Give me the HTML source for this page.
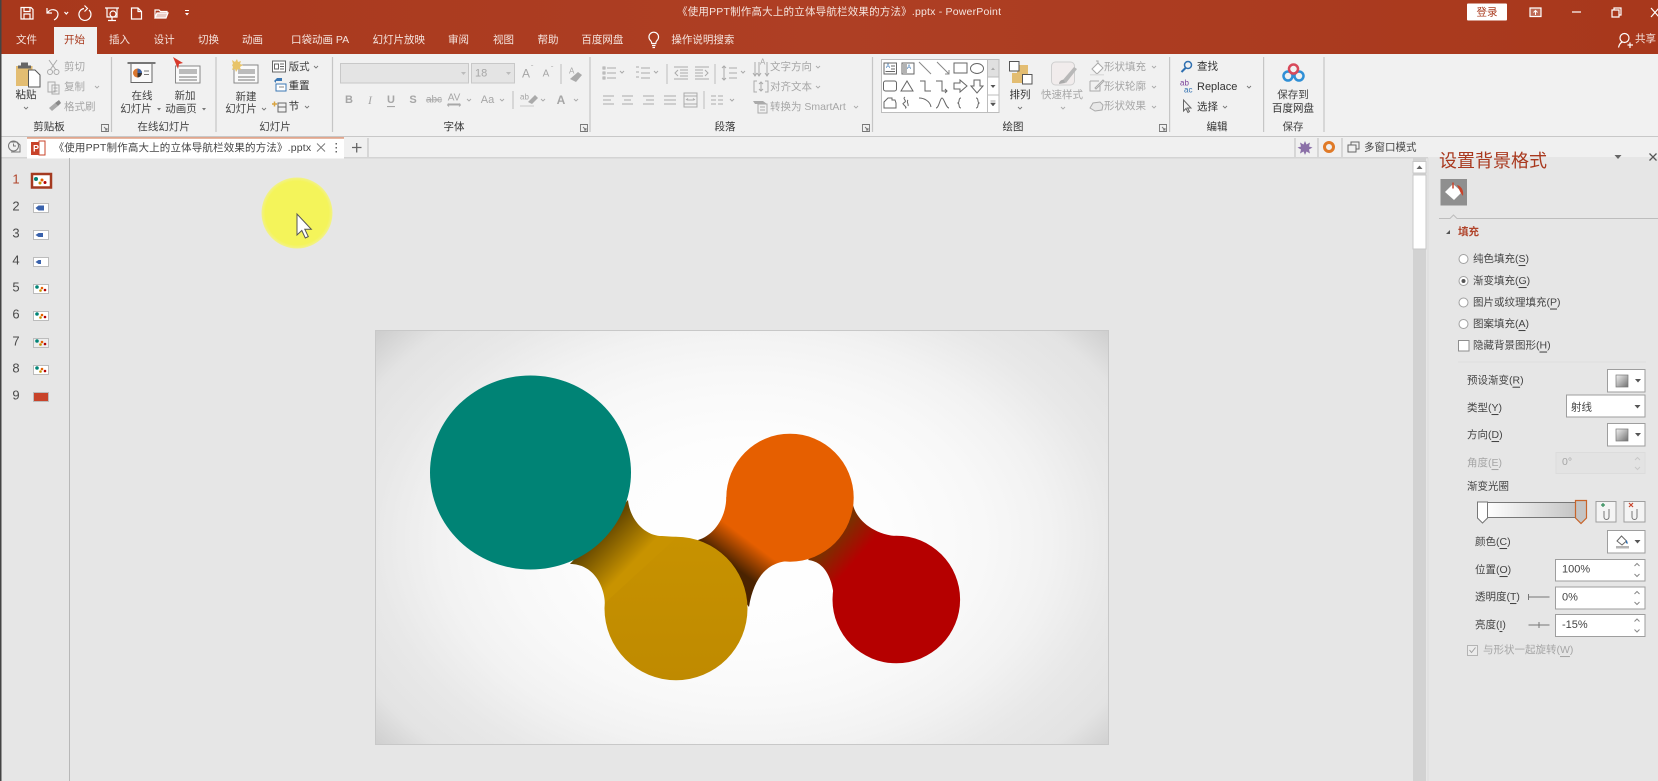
<!DOCTYPE html>
<html lang="zh"><head><meta charset="utf-8"><title>PowerPoint</title>
<style>
html,body{margin:0;padding:0;width:1658px;height:781px;overflow:hidden;background:#e6e6e6}
svg{display:block;position:absolute;left:0;top:0;filter:blur(.3px)}
text{font-family:"Liberation Sans","Noto Sans CJK SC",sans-serif;font-size:10.5px;dominant-baseline:central;fill:#444}
.w{fill:#f5e4de}.g{fill:#a6a6a6}.k{fill:#333}.c{text-anchor:middle}
.n{font-size:13px;text-anchor:middle;fill:#4a4a4a}
.s{fill:none;stroke:#fff;stroke-width:1.2}
.i{fill:none;stroke:#777;stroke-width:1}
.h{fill:none;stroke:#aaa;stroke-width:1}
.v{fill:none;stroke:#666;stroke-width:1}
.sep{stroke:#c6c6c6;stroke-width:1.2}
.a{fill:none;stroke:#777;stroke-width:.9}
.ag{fill:none;stroke:#aaa;stroke-width:.9}
.b{fill:#fff;stroke:#9e9e9e;stroke-width:1}
</style></head><body>
<svg width="1658" height="781" viewBox="0 0 1658 781" xmlns="http://www.w3.org/2000/svg">
<defs>
<linearGradient id="tb"><stop offset="0" stop-color="#a8381c"/><stop offset=".5" stop-color="#ae3f24"/><stop offset="1" stop-color="#a8381c"/></linearGradient>
<radialGradient id="sl" gradientUnits="userSpaceOnUse" cx="0" cy="0" r="1.22" gradientTransform="translate(745 540) scale(390 270)"><stop offset="0" stop-color="#fff"/><stop offset=".3" stop-color="#fdfdfd"/><stop offset=".5" stop-color="#f8f8f8"/><stop offset=".64" stop-color="#f2f2f2"/><stop offset=".78" stop-color="#e8e8e8"/><stop offset=".9" stop-color="#e3e3e3"/><stop offset="1" stop-color="#cdcdcd"/></radialGradient>
<linearGradient id="c1" gradientUnits="userSpaceOnUse" x1="600" y1="535" x2="631" y2="565"><stop offset="0" stop-color="#664800"/><stop offset="1" stop-color="#c89300"/></linearGradient>
<linearGradient id="c2" gradientUnits="userSpaceOnUse" x1="729" y1="563" x2="747" y2="539"><stop offset="0" stop-color="#4a2300"/><stop offset="1" stop-color="#e65f00"/></linearGradient>
<linearGradient id="c3" gradientUnits="userSpaceOnUse" x1="833" y1="540" x2="856" y2="560"><stop offset="0" stop-color="#7a3000"/><stop offset="1" stop-color="#b50000"/></linearGradient>
<linearGradient id="gold" x1="0" y1="0" x2="0" y2="1"><stop offset="0" stop-color="#c79200"/><stop offset="1" stop-color="#bf8a00"/></linearGradient>
<linearGradient id="bar"><stop offset="0" stop-color="#fff"/><stop offset="1" stop-color="#c4c4c4"/></linearGradient>
<linearGradient id="sw" x1="0" y1="0" x2="1" y2="1"><stop offset="0" stop-color="#f4f4f4"/><stop offset="1" stop-color="#707070"/></linearGradient>
<radialGradient id="yl"><stop offset="0" stop-color="#f4f45a"/><stop offset=".9" stop-color="#f4f45a"/><stop offset="1" stop-color="#f2f28a"/></radialGradient>
</defs>

<!-- base -->
<rect width="1658" height="781" fill="#e6e6e6"/>
<rect width="1658" height="54" fill="url(#tb)"/>
<rect y="54" width="1658" height="82" fill="#f1f1f1"/>
<rect y="136" width="1658" height="1" fill="#c8c8c8"/>
<rect y="137" width="1658" height="20" fill="#f0f0f0"/>
<rect y="157" width="1428" height="1.5" fill="#d4d4d4"/>
<rect x="0" y="0" width="1.5" height="781" fill="#444"/>

<!-- QAT -->
<path class="s" d="M21 7.500h10l2 2v9.500H21z M24 7.500v4h6v-4 M24 19v-5h6v5"/>
<path class="s" stroke-width="1.500" d="M47 8v5h5 M47.500 13C50 8 58 9 58 14c0 3-2 5-4 6"/>
<path class="s" stroke-width=".8" d="M64.500 12l1.800 2 1.800-2"/>
<path class="s" stroke-width="1.500" d="M84 8.500a6 6 0 1 0 5 1.500 M84.500 5.500l3 3-3 3"/>
<path class="s" d="M105 8h14 M107 8v9h10V8 M112 17v3 M108 20.500h8"/><circle class="s" cx="113" cy="14" r="3"/>
<path class="s" d="M131.500 8h6.500l3.500 3.500V19h-10z M138 8v3.500h3.500"/>
<path class="s" d="M155 18V10h4l1.500 1.500h6.500V13 M155 18l2-5h11l-2 5z"/><path d="M157 13h11l-2 5h-11z" fill="#fff" opacity=".75"/>
<path d="M185 10h4v1h-4z M185 13l2 2.500 2-2.500z" fill="#fff"/>

<!-- title -->
<text class="w c" x="839" y="12" textLength="324" lengthAdjust="spacing">《使用PPT制作高大上的立体导航栏效果的方法》.pptx  -  PowerPoint</text>
<rect x="1467" y="3.500" width="40" height="17" rx="1" fill="#fff"/>
<text class="c" x="1487" y="12.500" style="fill:#a93a1e">登录</text>
<path class="s" d="M1530 8h11v8.500h-11z"/><path d="M1530 8h11v8.500h-11z" fill="#fff" opacity=".25"/><path d="M1535.500 15v-4.500M1533.500 12.500l2-2 2 2" stroke="#fff" fill="none"/>
<path class="s" d="M1572 12h9"/>
<path class="s" d="M1612 10h7v7h-7z M1614 10V8h7v7h-2"/>
<path class="s" d="M1651 8l8 9M1659 8l-8 9"/>

<!-- tabs -->
<path d="M54 27h43v27H54z" fill="#f1f1f1"/>
<g class="w">
<text class="w" x="16" y="40">文件</text>
<text x="64" y="40" style="fill:#a93a1e">开始</text>
<text class="w" x="109" y="40">插入</text>
<text class="w" x="153.600" y="40">设计</text>
<text class="w" x="198" y="40">切换</text>
<text class="w" x="242" y="40">动画</text>
<text class="w" x="291" y="40">口袋动画 PA</text>
<text class="w" x="372.500" y="40">幻灯片放映</text>
<text class="w" x="448" y="40">审阅</text>
<text class="w" x="493" y="40">视图</text>
<text class="w" x="537.500" y="40">帮助</text>
<text class="w" x="581.400" y="40">百度网盘</text>
<text class="w" x="671.400" y="40">操作说明搜索</text>
<text class="w" x="1635" y="39">共享</text>
</g>
<path class="s" d="M650.500 40.500a4.800 4.800 0 1 1 6.500 0c-1 1-1.200 2-1.200 3h-4c0-1-.3-2-1.300-3z M652 45.500h3.500 M652.500 47.500h2.500"/>
<circle class="s" cx="1624.500" cy="38" r="4.500"/><path class="s" d="M1618.500 47.500c.7-3 2.500-5 4-5.500 M1627 44v-0 M1627.500 45h5.500 M1630 42.500v5.500"/>

<!-- group separators -->
<g class="sep">
<path d="M111.500 57v75M216 57v75M332.500 57v75M590 57v75M872.500 57v75M1169.600 57v75M1263.600 57v75M1324 57v75"/>
</g>
<g>
<text class="c k" x="49" y="127">剪贴板</text>
<text class="c" x="163.600" y="127">在线幻灯片</text>
<text class="c" x="275" y="127">幻灯片</text>
<text class="c k" x="454" y="127">字体</text>
<text class="c k" x="725" y="127">段落</text>
<text class="c k" x="1013" y="127">绘图</text>
<text class="c k" x="1217" y="127">编辑</text>
<text class="c" x="1293" y="127">保存</text>
</g>
<g class="a">
<path class="a" d="M101.500 124.500h7v7h-7z M104 127l3 3 M107 128v2h-2"/>
<path class="a" d="M580.500 124.500h7v7h-7z M583 127l3 3 M586 128v2h-2" stroke="#aaa"/>
<path class="a" d="M862.500 124.500h7v7h-7z M865 127l3 3 M868 128v2h-2" stroke="#aaa"/>
<path class="a" d="M1159.500 124.500h7v7h-7z M1162 127l3 3 M1165 128v2h-2" stroke="#aaa"/>
</g>

<!-- clipboard -->
<path d="M16 66h16.500v20H16z" fill="#e3bd72"/>
<path d="M21 62.500h7v3h3v3H18v-3h3z" fill="#666"/>
<path d="M28.500 70h6.500l5 5v12H28.500z" fill="#fff" stroke="#555"/>
<text class="c k" x="26" y="95">粘贴</text>
<path class="a" d="M24 107l2 2 2-2"/>
<path class="h" d="M49 60l7 10M57 60l-7 10" stroke="#999"/><circle class="h" cx="50" cy="72" r="2.500"/><circle class="h" cx="56.500" cy="72" r="2.500"/>
<text class="g" x="64" y="67">剪切</text>
<path class="h" d="M48 82h7v10h-7z M52 85h7v9h-7z M53.500 88h4M53.500 91h4"/>
<text class="g" x="64" y="87">复制</text><path class="ag" d="M95 86l2 2 2-2"/>
<path d="M49 108l6-5 3 3-6 5z" fill="#aaa"/><path d="M55 103l4-3 2 3-3 3z" fill="#888"/>
<text class="g" x="64" y="107">格式刷</text>

<!-- online slides -->
<path d="M127.500 63h28" stroke="#777" stroke-width="2"/>
<path d="M131 64v18.500h21V64" class="v" style="fill:#fafafa"/>
<circle cx="137.500" cy="73" r="4.500" fill="#d9762e"/><path d="M137.500 73v-4.500a4.500 4.500 0 0 1 4.500 4.500z" fill="#3a64a8"/><path d="M137.500 73h4.500a4.500 4.500 0 0 1-4.500 4.500z" fill="#333"/>
<path class="a" d="M144 71h5M144 74.500h5"/>
<text class="c" x="142" y="96">在线</text>
<text class="c" x="136" y="109">幻灯片</text><path d="M157 108h4l-2 2.500z" fill="#777"/>
<path d="M175.500 66h24.500v17h-24.500z" fill="#fafafa" stroke="#888"/>
<rect x="179" y="69" width="18" height="5" fill="#bbb"/><path class="a" d="M179 77h18M179 80h18"/>
<path d="M173 57l10 6-4 1-1 5z" fill="#d8392b"/>
<text class="c" x="185" y="96">新加</text>
<text class="c" x="181" y="109">动画页</text><path d="M202 108h4l-2 2.500z" fill="#777"/>

<!-- slides -->
<path d="M234 65h24v18h-24z" fill="#fafafa" stroke="#888"/><rect x="238" y="69" width="17" height="5" fill="#bbb"/><path class="a" d="M238 77h17M238 80h17"/>
<path d="M232 65l1-1-1-4 3 2 2-3 1 3 3-1-1 3 3 1-3 2 1 3-3-1-2 3-1-3-3 1 1-3z" fill="#e8c46a"/>
<text class="c" x="246" y="97">新建</text>
<text class="c" x="241" y="109">幻灯片</text><path class="a" d="M262 108l2 2 2-2"/>
<path class="v" d="M272.500 61h13v11h-13z M274.500 64h4v5h-4z M280 64h4M280 66.500h4M280 69h4" stroke="#777" style="fill:#fff"/>
<text x="288.600" y="67">版式</text><path class="a" d="M314 66l2 2 2-2"/>
<path d="M274 81l3-3 5 0 0 3h-6v2z" fill="#3c78b4"/><path d="M276 84h10v7h-10z" fill="#fff" stroke="#3c78b4"/><path class="a" d="M279 87h5"/>
<text class="k" x="288.600" y="86">重置</text>
<path d="M272 104h5M274.500 101.500v5" stroke="#d9a441" stroke-width="1.500"/><path class="v" d="M278 103h8v9h-8z M278 107h8"/>
<text class="k" x="288.600" y="106.500">节</text><path class="a" d="M305 106l2 2 2-2"/>

<!-- font -->
<rect x="340.500" y="63.500" width="128" height="19.500" fill="#e4e4e4" stroke="#c8c8c8"/>
<path d="M461 72h5l-2.500 3z" fill="#bbb"/>
<rect x="471.500" y="63.500" width="43" height="19.500" fill="#e4e4e4" stroke="#c8c8c8"/>
<text class="g" x="475" y="73.500" style="font-size:11px">18</text>
<path d="M506 72h5l-2.500 3z" fill="#bbb"/>
<text class="g c" x="526" y="73.500" style="font-size:12px">A</text><text class="g" x="531" y="69" style="font-size:7px">ˆ</text>
<text class="g c" x="546" y="74" style="font-size:10px">A</text><text class="g" x="551" y="70" style="font-size:7px">ˇ</text>
<path class="sep" d="M561 64v20"/>
<text class="g" x="569" y="71" style="font-size:8px">A</text><path d="M570 79l8-7 4 3-6 7z" fill="#aaa"/>
<g class="g" style="font-size:11px">
<text class="g c" x="349" y="100" style="font-weight:bold;font-size:11px">B</text>
<text class="g c" x="370" y="100" style="font-style:italic;font-family:'Liberation Serif',serif;font-size:12px">I</text>
<text class="g c" x="391" y="100" style="font-weight:bold;text-decoration:underline;font-size:11px">U</text>
<text class="g c" x="413" y="100" style="font-weight:bold;font-size:11px">S</text>
<text class="g c" x="434" y="100" style="text-decoration:line-through;font-size:10px">abc</text>
<text class="g c" x="454" y="98" style="font-size:10px;text-decoration:underline">AV</text>
<text class="g c" x="487.500" y="100" style="font-size:11px">Aa</text>
</g>
<path class="ag" d="M448 105h12M449 103.500l-1.500 1.500 1.500 1.500M459 103.500l1.500 1.500-1.500 1.500 M467 99l2 2 2-2 M500 99l2 2 2-2 M541 99l2 2 2-2 M574 99l2 2 2-2"/>
<path class="sep" d="M513 91v18"/>
<text class="g" x="520" y="97" style="font-size:8px">ab</text><path d="M528 102l7-7 3 3-6 6z" fill="#aaa"/><rect x="520" y="105" width="14" height="2" fill="#ddd"/>
<text class="g c" x="561" y="100" style="font-size:12px;font-weight:bold">A</text>

<!-- paragraph -->
<g class="h">
<path class="h" d="M603 67h2v2h-2z M603 72h2v2h-2z M603 77h2v2h-2z M607 68h9M607 73h9M607 78h9"/>
<path class="h" d="M620 71l2 2 2-2"/>
<path class="h" d="M636 67h3M636 72h3M636 77h3 M641 68h9M641 73h9M641 78h9 M654 71l2 2 2-2"/>
<path class="h" d="M674 67h14M680 70h8M680 73h8M680 76h8M674 79h14 M678 70l-3 3 3 3"/>
<path class="h" d="M695 67h14M695 70h8M695 73h8M695 76h8M695 79h14 M705 70l3 3-3 3"/>
<path class="h" d="M724 66v14 M722 68l2-2 2 2 M722 78l2 2 2-2 M729 68h8M729 73h8M729 78h8 M741 71l2 2 2-2"/>
<path class="h" d="M603 96h11M603 100h8M603 104h11"/>
<path class="h" d="M622 96h11M624 100h7M622 104h11"/>
<path class="h" d="M643 96h11M646 100h8M643 104h11"/>
<path class="h" d="M664 96h12M664 100h12M664 104h12"/>
<path class="h" d="M684 93h13v14h-13z M684 96h13M684 104h13M687 100h7M686 100l2-1.500M695 100l-2-1.500"/>
<path class="h" d="M711 96h5M711 100h5M711 104h5M718 96h5M718 100h5M718 104h5 M730 99l2 2 2-2"/>
</g>
<path class="sep" d="M667 64v20M715 64v20M704 91v18"/>
<path class="h" d="M755 62v14M759 62v14M767 62v14 M753 73l2 3 2-3 M757 73l2 3 2-3 M765 73l2 3 2-3"/>
<text class="g" x="760" y="62" style="font-size:8px">A</text>
<text class="g" x="770" y="67">文字方向</text><path class="ag" d="M816 66l2 2 2-2"/>
<path class="h" d="M757 81h-3v11h3M765 81h3v11h-3 M761 82v9M759 84l2-2 2 2M759 89l2 2 2-2"/>
<text class="g" x="770" y="87">对齐文本</text><path class="ag" d="M816 86l2 2 2-2"/>
<path d="M753 101h10l4 3h-12z" fill="#aaa"/><path class="h" d="M758 104h9v9h-9z M760 107h5M760 110h5"/>
<text class="g" x="770" y="107">转换为 SmartArt</text><path class="ag" d="M854 106l2 2 2-2"/>

<!-- shapes gallery -->
<rect x="881.500" y="59.500" width="117.500" height="53" fill="#fff" stroke="#bdbdbd"/>
<rect x="987.500" y="59.500" width="11.500" height="17.500" fill="#e0e0e0" stroke="#bdbdbd"/>
<rect x="987.500" y="77" width="11.500" height="18" fill="#fff" stroke="#bdbdbd"/>
<rect x="987.500" y="95" width="11.500" height="17.500" fill="#fff" stroke="#bdbdbd"/>
<path d="M991 70l2-2.500 2 2.500z" fill="#aaa"/><path d="M990.500 85h5l-2.500 3z" fill="#555"/><path d="M990.500 101h5M990.500 103h5l-2.500 3z" fill="#555" stroke="#555" stroke-width=".5"/>
<g fill="none" stroke="#666" stroke-width="1">
<path d="M884 63h12.500v11H884z M891 66h4M891 69h4M885.500 71.500h9.500"/><text x="886" y="67" style="font-size:6px;fill:#2f6fb0;stroke:none">A</text>
<path d="M902 63h12v11h-12z M904 64v9M906 64v9"/><text x="907" y="68" style="font-size:6px;fill:#2f6fb0;stroke:none">A</text>
<path d="M919 62l12 12" stroke="#888"/>
<path d="M937 62l12 12M949 70v4h-4" stroke="#888"/>
<path d="M954 63h13v10h-13z"/>
<ellipse cx="977" cy="68.500" rx="6.500" ry="5"/>
<rect x="883.500" y="81" width="13" height="10" rx="2"/>
<path d="M901 91l6-10 6 10z"/>
<path d="M920 81h5v10h6"/>
<path d="M936 81h6v10h5M945 89l2 2-2 2"/>
<path d="M954 83h6v-3l7 6-7 6v-3h-6z"/>
<path d="M974 80h6v6h3l-6 7-6-7h3z"/>
<path d="M884 108v-6l4-4h4v2h3l1 3v5z"/>
<path d="M905 97c-3 2 2 3 0 5s-3 1-1 3 3 3 1 3M908 100c-2 2 1 4 0 6"/>
<path d="M919 98c5 0 11 3 12 9"/>
<path d="M936 108c3 0 4-10 6-10s4 10 7 10"/>
<path d="M961 98c-3 0-1 4-3 5 2 1 0 5 3 5"/>
<path d="M976 98c3 0 1 4 3 5-2 1 0 5-3 5"/>
</g>

<!-- arrange -->
<rect x="1017" y="65" width="11" height="13" fill="#e3bd72"/>
<rect x="1012" y="73" width="11" height="10" fill="#e3bd72"/>
<rect x="1009.500" y="61.500" width="9.500" height="9.500" fill="#fff" stroke="#555"/>
<rect x="1022.500" y="74.500" width="9.500" height="9.500" fill="#fff" stroke="#555"/>
<text class="c k" x="1020" y="95">排列</text><path class="a" d="M1018 107l2 2 2-2"/>
<rect x="1051.500" y="62" width="23" height="23" rx="4" fill="#f1ecec" stroke="#cfcfcf"/>
<path d="M1062 81l12-14 3 2-11 14z" fill="#b8b8b8"/><path d="M1059 84c0-3 3-5 5-4l1 3z" fill="#aaa"/>
<text class="c g" x="1062" y="95">快速样式</text><path class="ag" d="M1061 107l2 2 2-2"/>
<path d="M1092 69l6-6 5 5-6 6z" fill="#fff" stroke="#aaa"/><path d="M1096 61h2v3" fill="none" stroke="#aaa"/><rect x="1090" y="74" width="14" height="1.500" fill="#ddd"/>
<text class="g" x="1104" y="67">形状填充</text><path class="ag" d="M1152 66l2 2 2-2"/>
<path class="h" d="M1090 81h9M1090 81v10h10v-6 M1095 88l8-8 1 1-8 8z"/>
<text class="g" x="1104" y="86.500">形状轮廓</text><path class="ag" d="M1152 86l2 2 2-2"/>
<path d="M1090 108l3-5 7-1 3 3-1 5-7 1z" fill="#e8e8e8" stroke="#aaa"/>
<text class="g" x="1104" y="106">形状效果</text><path class="ag" d="M1152 106l2 2 2-2"/>

<!-- edit -->
<circle cx="1188" cy="65" r="3.500" fill="none" stroke="#2f6fb0" stroke-width="1.500"/><path d="M1185.500 68l-4 4" stroke="#2f6fb0" stroke-width="2"/>
<text class="k" x="1197" y="66.500">查找</text>
<text x="1180" y="83" style="font-size:8px;fill:#7a3f98">ab</text><text x="1184" y="90" style="font-size:8px;fill:#2f6fb0">ac</text>
<text class="k" x="1197" y="87" style="font-size:11px">Replace</text><path class="a" d="M1247 86l2 2 2-2"/>
<path class="v" d="M1183.500 100v11l2.500-2.500 2 4 1.500-1-2-3.500h3.500z" stroke="#777"/>
<text class="k" x="1197" y="107">选择</text><path class="a" d="M1223 106l2 2 2-2"/>

<!-- baidu -->
<circle cx="1288" cy="76" r="4.500" fill="none" stroke="#2f8fd6" stroke-width="2.500"/>
<circle cx="1299" cy="76" r="4.500" fill="none" stroke="#2f8fd6" stroke-width="2.500"/>
<circle cx="1293.500" cy="69" r="4.500" fill="none" stroke="#d8495a" stroke-width="2.500"/>
<text class="c" x="1293" y="95">保存到</text><text class="c k" x="1293" y="108.500">百度网盘</text>

<!-- doc tabs -->
<circle cx="13.500" cy="146" r="5" class="i"/><path class="i" d="M10 142h7l3 3v7h-9 M13.500 143.500v2.500h2.500"/>
<rect x="27" y="138.500" width="317" height="20" fill="#fff"/>
<rect x="27" y="137" width="317" height="1.800" fill="#e0a68e"/>
<rect x="31" y="142" width="10" height="13" fill="#c8432a"/><rect x="39" y="141" width="6" height="14" fill="#fff" stroke="#c8432a"/>
<text x="33" y="148.500" style="font-size:9px;font-weight:bold;fill:#fff">P</text>
<text x="53.600" y="148" textLength="257.500" lengthAdjust="spacing">《使用PPT制作高大上的立体导航栏效果的方法》.pptx</text>
<path class="a" d="M317 143.500l8 8M325 143.500l-8 8"/>
<path d="M335.500 143h1.500v1.500h-1.500zM335.500 147h1.500v1.500h-1.500zM335.500 151h1.500v1.500h-1.500z" fill="#666"/>
<path d="M352 147.500h9.500M356.700 143v9.500" stroke="#666" stroke-width="1.300"/>
<path class="sep" d="M368 138v19 M1295 138v19 M1318 138v19 M1342 138v19"/>
<path d="M1305 141l1.500 3.500 3.500-2-1 4 3.500 1-3.500 2 1 4-3.500-2-1.500 3.500-1.500-3.500-3.500 2 1-4-3.500-2 3.500-1-1-4 3.500 2z" fill="#8b70a8"/>
<circle cx="1329" cy="147" r="4.500" fill="none" stroke="#e07a28" stroke-width="3"/>
<path class="v" d="M1348 145h8v7h-8z M1351 145v-3h8v7h-3"/>
<text x="1364" y="147.500">多窗口模式</text>

<!-- slide panel -->
<path d="M69.500 158v623" stroke="#b8b8b8" stroke-width="1"/>
<text class="n" x="16" y="179" style="fill:#b0442a">1</text>
<text class="n" x="16" y="206">2</text><text class="n" x="16" y="233">3</text><text class="n" x="16" y="260">4</text><text class="n" x="16" y="287">5</text><text class="n" x="16" y="314">6</text><text class="n" x="16" y="341">7</text><text class="n" x="16" y="368">8</text><text class="n" x="16" y="395">9</text>
<rect x="32" y="174" width="19" height="13.500" fill="#fff" stroke="#a43a20" stroke-width="2.500"/>
<g><circle cx="36" cy="179" r="2" fill="#008375"/><circle cx="40" cy="183" r="1.500" fill="#c79200"/><circle cx="42" cy="180" r="1.500" fill="#e65f00"/><circle cx="45" cy="182.500" r="1.500" fill="#b50000"/></g>
<g fill="#fff" stroke="#bcbcbc">
<rect x="33.500" y="203.500" width="15" height="9"/><rect x="33.500" y="230.500" width="15" height="9"/><rect x="33.500" y="257.500" width="15" height="9"/><rect x="33.500" y="284.500" width="15" height="9"/><rect x="33.500" y="311.500" width="15" height="9"/><rect x="33.500" y="338.500" width="15" height="9" fill="#eee"/><rect x="33.500" y="365.500" width="15" height="9"/>
</g>
<rect x="33.500" y="392.500" width="15" height="9" fill="#c8432a" stroke="#bcbcbc"/>
<g fill="#3a62ac">
<path d="M35.500 208l3-2.500h5.500v5h-5.500z"/>
<path d="M35.500 235l3-2h4.500v4h-4.500z"/>
<path d="M35.500 262l3-2h2.500v4h-2.500z"/>
</g>
<g id="t5"><circle cx="37" cy="287" r="1.800" fill="#008375"/><circle cx="40.500" cy="290.500" r="1.300" fill="#c79200"/><circle cx="42" cy="288" r="1.300" fill="#e65f00"/><circle cx="45" cy="290" r="1.300" fill="#b50000"/></g>
<use href="#t5" y="27"/><use href="#t5" y="54"/><use href="#t5" y="81"/>

<!-- canvas scrollbar -->
<rect x="1413" y="158" width="13" height="623" fill="#d2d2d2"/>
<rect x="1413" y="161.500" width="13" height="11.500" fill="#fff" stroke="#c8c8c8"/>
<path d="M1416.500 169h6l-3-3.500z" fill="#666"/>
<rect x="1413" y="175" width="13" height="74" fill="#fff" stroke="#c8c8c8"/>

<!-- slide -->
<rect x="375.500" y="330.500" width="733" height="414" fill="url(#sl)" stroke="#c8c8c8"/>
<ellipse cx="896.300" cy="599.500" rx="63.800" ry="63.800" fill="#b50000"/>
<path d="M853 505C857 520 872 533 894 536L835 613C835 585 828 562 808 560Z" fill="url(#c3)"/>
<ellipse cx="790" cy="497.700" rx="63.700" ry="64" fill="#e65f00"/>
<path d="M698 540C712 536 726 520 726.300 497L793 561C770 560 754 575 749 607Z" fill="url(#c2)"/>
<ellipse cx="676" cy="608.500" rx="71.500" ry="71.700" fill="url(#gold)"/>
<path d="M628 500C630 520 645 536 662 536L677 537L605 603C604 585 593 564 570 564Z" fill="url(#c1)"/>
<ellipse cx="530.500" cy="472.500" rx="100.500" ry="97" fill="#008375"/>

<!-- highlight + cursor -->
<circle cx="297" cy="213" r="35.500" fill="url(#yl)"/>
<path d="M297 214v21l4.800-4.500 3.500 7.500 3-1.400-3.500-7.300h6.500z" fill="#fff" stroke="#555" stroke-width="1"/>

<!-- format pane -->
<path d="M1428 158v623" stroke="#dcdcdc"/>
<text x="1439" y="161" style="font-size:18px;fill:#a9391f">设置背景格式</text>
<path d="M1614.500 155h7l-3.500 4z" fill="#666"/>
<path d="M1649.500 153.500l7 7M1656.500 153.500l-7 7" stroke="#555" stroke-width="1.300"/>
<rect x="1440.500" y="179" width="26.500" height="26.500" fill="#8f8f8f"/>
<path d="M1445 192l8-8 9 8-8 8z" fill="#fff"/><path d="M1453 182.500v6" stroke="#c8432a" stroke-width="1.500"/><path d="M1457 185c4 1 7 5 6 11l-2.500-3.500z" fill="#c8432a"/>
<path d="M1439 218.500h11l3.500-3.500 3.500 3.500H1658" fill="none" stroke="#bdbdbd"/>
<path d="M1446 234l4-4v4z" fill="#555"/>
<text x="1458" y="232" style="font-weight:bold;fill:#b0432a">填充</text>
<g fill="#fff" stroke="#a0a0a0"><circle cx="1463.500" cy="259" r="4.500"/><circle cx="1463.500" cy="281" r="4.500"/><circle cx="1463.500" cy="302.500" r="4.500"/><circle cx="1463.500" cy="324" r="4.500"/></g>
<circle cx="1463.500" cy="281" r="2" fill="#555"/>
<text x="1473" y="259">纯色填充(<tspan text-decoration="underline">S</tspan>)</text>
<text x="1473" y="281">渐变填充(<tspan text-decoration="underline">G</tspan>)</text>
<text x="1473" y="302.500">图片或纹理填充(<tspan text-decoration="underline">P</tspan>)</text>
<text x="1473" y="324">图案填充(<tspan text-decoration="underline">A</tspan>)</text>
<rect x="1458.500" y="340.500" width="10.500" height="10.500" fill="#fff" stroke="#8e8e8e"/>
<text x="1473" y="345.500">隐藏背景图形(<tspan text-decoration="underline">H</tspan>)</text>
<path d="M1458 362h188" stroke="#dedede"/>

<text x="1467" y="380.700">预设渐变(<tspan text-decoration="underline">R</tspan>)</text>
<rect class="b" x="1607.500" y="369.500" width="37.500" height="22.500"/>
<rect x="1616" y="375" width="12" height="12" fill="url(#sw)" stroke="#777" stroke-width=".7"/><path d="M1635 379h6l-3 3.500z" fill="#555"/>

<text x="1467" y="408">类型(<tspan text-decoration="underline">Y</tspan>)</text>
<rect class="b" x="1566.500" y="395" width="78.500" height="22"/>
<text x="1571" y="407.500">射线</text><path d="M1634.500 405h6l-3 3.500z" fill="#555"/>

<text x="1467" y="435">方向(<tspan text-decoration="underline">D</tspan>)</text>
<rect class="b" x="1607.500" y="423.500" width="37.500" height="22.500"/>
<rect x="1616" y="429" width="12" height="12" fill="url(#sw)" stroke="#777" stroke-width=".7"/><path d="M1635 433h6l-3 3.500z" fill="#555"/>

<text class="g" x="1467" y="463">角度(<tspan text-decoration="underline">E</tspan>)</text>
<rect x="1556" y="452.500" width="89" height="21" fill="#e3e3e3" stroke="#dcdcdc"/>
<text class="g" x="1562" y="462">0°</text>
<path d="M1635 460l2.500-2.500 2.500 2.500M1635 467l2.500 2.500 2.500-2.500" fill="none" stroke="#c8c8c8"/>

<text x="1467" y="486.500">渐变光圈</text>
<rect x="1486" y="502.500" width="90" height="15" fill="url(#bar)" stroke="#777"/>
<path d="M1477.500 502h10v16l-5 5-5-5z" fill="#fff" stroke="#777"/>
<path d="M1575.500 500.500h11v17.500l-5.500 5.500-5.500-5.500z" fill="#c4c4c4" stroke="#c8642a" stroke-width="1.200"/>
<rect class="b" x="1596" y="501.500" width="20" height="20.500" style="fill:#f4f4f4"/>
<path d="M1604 511v6a2 2 0 0 0 5 0v-8" fill="none" stroke="#777"/><path d="M1601 505h4M1603 503v4" stroke="#2e8b57" stroke-width="1.200"/>
<rect class="b" x="1624" y="501.500" width="21" height="20.500" style="fill:#f4f4f4"/>
<path d="M1632 511v6a2 2 0 0 0 5 0v-8" fill="none" stroke="#777"/><path d="M1629 503l4 4M1633 503l-4 4" stroke="#c8432a" stroke-width="1.200"/>

<text x="1475" y="542">颜色(<tspan text-decoration="underline">C</tspan>)</text>
<rect class="b" x="1607.500" y="530.500" width="37.500" height="22.500"/>
<path d="M1617 541l4.500-5 5 5-4.500 4z" fill="#fff" stroke="#666"/><path d="M1626 540c1.500 1 2 3 1.500 4l-1.500-1z" fill="#2f6fb0"/><rect x="1616" y="546" width="13" height="2.500" fill="#b4b4b4"/>
<path d="M1634.500 540h6l-3 3.500z" fill="#555"/>

<text x="1475" y="570">位置(<tspan text-decoration="underline">O</tspan>)</text>
<rect class="b" x="1555.500" y="559.500" width="89.500" height="21.500"/>
<text x="1562" y="569.500" style="font-size:11px">100%</text>
<path d="M1634.500 566l2.500-2.500 2.500 2.500M1634.500 574l2.500 2.500 2.500-2.500" fill="none" stroke="#888"/>

<text x="1475" y="597">透明度(<tspan text-decoration="underline">T</tspan>)</text>
<path d="M1528.500 594v6M1528.500 597h21" stroke="#777"/>
<rect class="b" x="1555.500" y="587" width="89.500" height="22"/>
<text x="1562" y="597.500" style="font-size:11px">0%</text>
<path d="M1634.500 594l2.500-2.500 2.500 2.500M1634.500 602l2.500 2.500 2.500-2.500" fill="none" stroke="#888"/>

<text x="1475" y="625">亮度(<tspan text-decoration="underline">I</tspan>)</text>
<path d="M1539 622v6M1528.500 625h21" stroke="#777"/>
<rect class="b" x="1555.500" y="614.500" width="89.500" height="22"/>
<text x="1562" y="625" style="font-size:11px">-15%</text>
<path d="M1634.500 621.500l2.500-2.500 2.500 2.500M1634.500 629.500l2.500 2.500 2.500-2.500" fill="none" stroke="#888"/>

<rect x="1467.500" y="645.500" width="10" height="10" fill="#ececec" stroke="#b4b4b4"/>
<path d="M1469.500 650l2 2.500 4-5" fill="none" stroke="#a0a0a0"/>
<text class="g" x="1483" y="650">与形状一起旋转(<tspan text-decoration="underline">W</tspan>)</text>
</svg>
</body></html>
